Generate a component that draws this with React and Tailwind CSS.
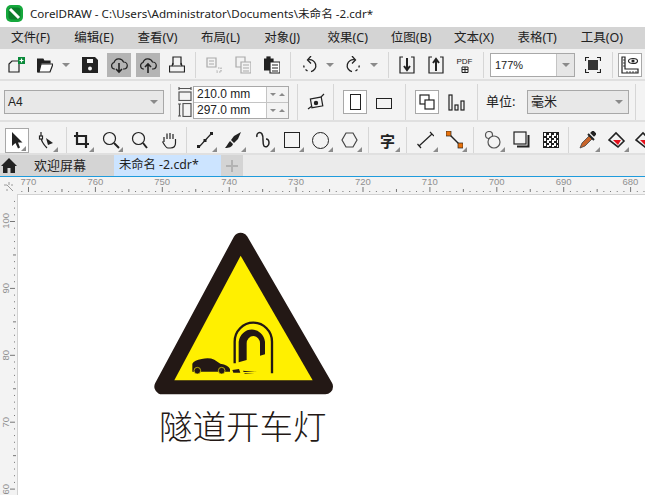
import React from 'react';

const INK = '#222';
const LATIN = "font-['Liberation_Sans',sans-serif]";

const Ico = ({ w = 16, h = 18, className = '', children }) => (
  <svg width={w} height={h} viewBox={`0 0 ${w} ${h}`} fill="none" stroke={INK} strokeWidth="1.2" className={`shrink-0 ${className}`}>
    {children}
  </svg>
);

const Sep = ({ className = '' }) => <div className={`w-px h-[26px] bg-[#d6d6d6] shrink-0 ${className}`} />;

const Caret = ({ className = '' }) => (
  <div className={`w-0 h-0 shrink-0 border-x-[4px] border-x-transparent border-t-[4px] border-t-[#8a8a8a] ${className}`} />
);

const Flyout = () => (
  <div className="absolute right-[2px] bottom-[1px] w-0 h-0 border-l-[5px] border-l-transparent border-b-[5px] border-b-[#8c8c8c]" />
);

const Tool = ({ children, active }) => (
  <div className={`relative h-[25px] shrink-0 flex items-center justify-center ${active ? 'bg-white border border-[#a8a8a8] w-[24px] mx-[2.5px]' : 'w-[29px]'}`}>
    {children}
    <Flyout />
  </div>
);

const menus = ['文件(F)', '编辑(E)', '查看(V)', '布局(L)', '对象(J)', '效果(C)', '位图(B)', '文本(X)', '表格(T)', '工具(O)'];

const rulerLabels = [770, 760, 750, 740, 730, 720, 710, 700, 690, 680];
const sideLabels = [100, 90, 80, 70, 60];

const TopToolbar = () => (
  <div className="h-[32px] pt-[2px] shrink-0 bg-[#f3f3f3] border-b-2 border-[#e0e0e0] flex items-center pl-[8px]">
    <Ico w={17}>
      <path d="M1 8 4 5H11V16H1Z" />
      <rect x="10" y="1" width="7" height="7" fill="#0a8a3a" stroke="none" />
      <path d="M13.5 2.5v4M11.5 4.5h4" stroke="#fff" />
    </Ico>
    <Ico className="ml-[12px]">
      <path d="M0 3H6L7 5H13V7H4L2 16H0Z" fill={INK} />
      <path d="M4 8H16L13 16H2Z" fill="#fff" />
    </Ico>
    <Caret className="ml-[9px]" />
    <Ico className="ml-[12px]">
      <path d="M0 1H13L16 4V17H0Z" fill={INK} stroke="none" />
      <rect x="5" y="3" width="6" height="4" fill="#f3f3f3" stroke="none" />
      <circle cx="8" cy="12.5" r="2" fill="#f3f3f3" stroke="none" />
    </Ico>
    <div className="ml-[9px] w-[24px] h-[24px] bg-[#b4b4b4] flex items-center justify-center">
      <Ico w={18}>
        <path d="M5 13H4A3.4 3.4 0 0 1 4 6.5 5 5 0 0 1 13.5 6 3.5 3.5 0 0 1 14 13H13" />
        <path d="M9 7V16M6 13 9 16 12 13" strokeWidth="1.6" />
      </Ico>
    </div>
    <div className="ml-[5px] w-[24px] h-[24px] bg-[#b4b4b4] flex items-center justify-center">
      <Ico w={18}>
        <path d="M5 13H4A3.4 3.4 0 0 1 4 6.5 5 5 0 0 1 13.5 6 3.5 3.5 0 0 1 14 13H13" />
        <path d="M9 17V8M6 11 9 8 12 11" strokeWidth="1.6" />
      </Ico>
    </div>
    <Ico className="ml-[9px]">
      <path d="M4 9V1H12V9M0.5 10H15.5V16H0.5Z" />
      <path d="M3 10 4 7M13 10 12 7" />
    </Ico>
    <Sep className="ml-[10px]" />
    <Ico className="ml-[10px]">
      <g stroke="#a9a9a9">
        <path d="M1 2H10V11H1ZM3 5H8M3 8H8" />
        <path d="M12 12H15V16H11V14" strokeDasharray="1.5 1" />
      </g>
    </Ico>
    <Ico className="ml-[13px]">
      <g stroke="#a9a9a9">
        <path d="M1 1H10V11H1Z" />
        <path d="M6 6H16V17H6ZM8 9H14M8 12H14M8 15H14" fill="#f3f3f3" />
      </g>
    </Ico>
    <Ico className="ml-[13px]">
      <path d="M0 3H9V14H0Z" fill={INK} />
      <rect x="3" y="1" width="3" height="3" fill={INK} />
      <path d="M6 6H16V17H6Z" fill="#fff" />
      <path d="M8 9H14M8 12H14M8 15H14" />
    </Ico>
    <Sep className="ml-[10px]" />
    <Ico className="ml-[10px]">
      <path d="M7 4A6 6 0 1 1 10 15.6" strokeWidth="1.3" />
      <path d="M6.5 15 4.5 13.5M3.2 11.5 2.6 9.5" strokeWidth="1.3" />
      <path d="M10 0 6.5 4 10 7.5" strokeWidth="1.3" />
    </Ico>
    <Caret className="ml-[9px]" />
    <Ico className="ml-[12px]">
      <path d="M9 4A6 6 0 1 0 6 15.6" strokeWidth="1.3" />
      <path d="M9.5 15 11.5 13.5M12.8 11.5 13.4 9.5" strokeWidth="1.3" />
      <path d="M6 0 9.5 4 6 7.5" strokeWidth="1.3" />
    </Ico>
    <Caret className="ml-[8px]" />
    <Sep className="ml-[10px]" />
    <Ico className="ml-[10px]">
      <path d="M4 1H1V17H15V1H12" />
      <path d="M8 2V13M5 10 8 14 11 10" strokeWidth="2" />
    </Ico>
    <Ico className="ml-[13px]">
      <path d="M4 1H1V17H15V1H12" />
      <path d="M8 15V4M5 7 8 3 11 7" strokeWidth="2" />
    </Ico>
    <div className={`ml-[12px] w-[17px] flex flex-col items-center text-[8px] leading-[9px] text-[#222] ${LATIN}`}>
      <span>PDF</span>
      <Ico w={8} h={7}>
        <path d="M1 1H7V6.5H1ZM4 1V6.5M1 3.5H7" strokeWidth="1" />
      </Ico>
    </div>
    <Sep className="ml-[10px]" />
    <div className="ml-[6px] w-[85px] h-[24px] border border-[#a8a8a8] bg-white flex items-center shrink-0">
      <span className={`flex-1 pl-[4px] text-[11px] text-[#222] ${LATIN}`}>177%</span>
      <div className="w-[18px] h-full bg-[#e6e6e6] border-l border-[#c4c4c4] flex items-center justify-center">
        <Caret />
      </div>
    </div>
    <Ico className="ml-[10px]">
      <path d="M0.5 5V1.5H4M12 1.5H15.5V5M15.5 13V16.5H12M4 16.5H0.5V13" />
      <rect x="3" y="4" width="10" height="10" fill="#333" stroke="none" />
    </Ico>
    <Sep className="ml-[11px]" />
    <div className="ml-[5px] w-[24px] h-[24px] bg-white border border-[#a8a8a8] flex items-center justify-center shrink-0">
      <Ico w={18}>
        <path d="M1 1H4V13H17V17H1Z" />
        <path d="M6 15V17M9 15V17M12 15V17M15 15V17M2 4H4M2 7H4M2 10H4" strokeWidth="0.8" />
        <ellipse cx="12" cy="5" rx="4.5" ry="2.5" />
        <circle cx="12" cy="5" r="1" fill={INK} />
      </Ico>
    </div>
  </div>
);

const PropertyBar = () => (
  <div className="h-[41px] pt-[3px] shrink-0 bg-[#f3f3f3] flex items-center pl-[4px] border-b-2 border-[#e0e0e0]">
    <div className="w-[160px] h-[24px] border border-[#a8a8a8] bg-[#e8e8e8] flex items-center justify-between pl-[3px] pr-[5px] shrink-0">
      <span className={`text-[12px] text-[#222] ${LATIN}`}>A4</span>
      <Caret />
    </div>
    <Sep className="ml-[6px] !h-[36px]" />
    <div className="ml-[7px] flex flex-col gap-[2px] shrink-0">
      <Ico w={14} h={14}>
        <path d="M1 1.5H13M1 0V3M13 0V3" stroke="#555" />
        <rect x="1" y="5" width="12" height="8.5" stroke="#555" />
      </Ico>
      <Ico w={14} h={14}>
        <path d="M1.5 1V13M0 1H3M0 13H3" stroke="#555" />
        <rect x="5" y="0.5" width="8" height="13" stroke="#555" />
      </Ico>
    </div>
    <div className="ml-[1px] w-[96px] h-[33px] border border-[#a8a8a8] flex flex-col shrink-0">
      {['210.0 mm', '297.0 mm'].map((v, i) => (
        <div key={v} className={`flex-1 flex ${i === 0 ? 'border-b border-[#c4c4c4]' : ''}`}>
          <span className={`w-[72px] bg-white pl-[3px] text-[12px] leading-[15px] text-[#222] ${LATIN}`}>{v}</span>
          <div className="flex-1 flex items-center justify-around border-l border-[#c4c4c4] px-[2px]">
            <Caret className="!border-x-[3px] !border-t-[3px]" />
            <div className="w-0 h-0 border-x-[3px] border-x-transparent border-b-[3px] border-b-[#8a8a8a]" />
          </div>
        </div>
      ))}
    </div>
    <Sep className="ml-[8px] !h-[36px]" />
    <div className="relative ml-[9px] shrink-0 w-[18px] h-[18px]">
      <Ico w={18} h={18}>
        <path d="M4 5H15V14H4Z" transform="rotate(-10 9 9)" />
        <circle cx="9" cy="10" r="1.6" fill={INK} />
        <path d="M1 16 5 13M14 4 17 1" />
      </Ico>
    </div>
    <Sep className="ml-[8px] !h-[36px]" />
    <div className="ml-[9px] w-[24px] h-[24px] bg-white border border-[#a8a8a8] flex items-center justify-center shrink-0">
      <div className="w-[11px] h-[16px] border border-[#222]" />
    </div>
    <div className="ml-[9px] w-[16px] h-[11px] border border-[#222] shrink-0 mt-[3px]" />
    <Sep className="ml-[13px] !h-[36px]" />
    <div className="ml-[9px] w-[24px] h-[24px] bg-white border border-[#a8a8a8] flex items-center justify-center shrink-0">
      <Ico w={16} h={16}>
        <rect x="1" y="1" width="9" height="9" />
        <rect x="6" y="6" width="9" height="9" fill="#fff" />
      </Ico>
    </div>
    <Ico w={17} h={17} className="ml-[9px]">
      <rect x="1" y="1" width="3" height="15" />
      <rect x="7" y="11" width="3" height="5" />
      <rect x="13" y="7" width="3" height="9" />
    </Ico>
    <Sep className="ml-[12px] !h-[36px]" />
    <span className="ml-[8px] w-[33px] text-[13px] text-[#222] shrink-0 whitespace-nowrap">单位:</span>
    <div className="ml-[8px] w-[102px] h-[24px] border border-[#a8a8a8] bg-[#e8e8e8] flex items-center justify-between pl-[3px] pr-[5px] shrink-0">
      <span className="text-[13px] text-[#222]">毫米</span>
      <Caret />
    </div>
    <Sep className="ml-[6px] !h-[36px]" />
  </div>
);

const ToolRow = () => (
  <div className="h-[33px] pt-[5px] shrink-0 bg-[#f3f3f3] flex items-center pl-[2px] border-b-2 border-[#e0e0e0]">
    <Tool active>
      <svg width="12" height="17" viewBox="0 0 12 17" fill={INK}><path d="M1 0V14L4.5 11 7 16.5 9 15.5 7 10.5H11.5Z" /></svg>
    </Tool>
    <Tool>
      <Ico w={16}>
        <path d="M3 1V6M3 6C3 11 6 14 9 17" />
        <rect x="1.5" y="5" width="3" height="3" fill="#fff" />
        <path d="M8 7 15 12 10 14Z" fill={INK} stroke="none" />
      </Ico>
    </Tool>
    <Sep className="ml-[6px]" />
    <Tool>
      <Ico w={17}>
        <path d="M4 1V13H16M1 5H13V17" strokeWidth="2.2" />
      </Ico>
    </Tool>
    <Tool>
      <Ico w={18}>
        <circle cx="7.5" cy="7.5" r="6" />
        <path d="M12 12 17 17" strokeWidth="2" />
      </Ico>
    </Tool>
    <div className="w-[29px] flex justify-center shrink-0">
      <Ico w={17}>
        <circle cx="7.5" cy="7.5" r="6" />
        <path d="M12 12 16 17" strokeWidth="2" />
      </Ico>
    </div>
    <div className="w-[29px] flex justify-center shrink-0">
      <Ico w={16}>
        <path d="M3 11V6M6 8V2.5M9 8V2M12 8V3M14.5 8V12C14.5 15 12.5 17 9.5 17H7C5 17 4 15 1.5 10.5" />
      </Ico>
    </div>
    <Sep className="ml-[3px] mr-[3px]" />
    <Tool>
      <Ico w={16}>
        <path d="M2 16 14 3" />
        <rect x="0" y="14" width="3" height="3" fill={INK} stroke="none" />
        <rect x="6.5" y="8" width="3" height="3" fill={INK} stroke="none" />
        <rect x="13" y="1" width="3" height="3" fill={INK} stroke="none" />
      </Ico>
    </Tool>
    <Tool>
      <svg width="17" height="18" viewBox="0 0 17 18" fill={INK}><path d="M16 1 9 5 6 9 9 12 13 8ZM5 10 8 13C7 16 4 17 0 17 2 15 3 12 5 10Z" /></svg>
    </Tool>
    <Tool>
      <Ico w={16}>
        <path d="M2 6C1 2 5 0 7 3 9 6 7 12 9 15 11 17 14 15 14 12 14 10 13 8 11 8" strokeWidth="1.5" />
      </Ico>
    </Tool>
    <Tool>
      <div className="w-[16px] h-[16px] border-[1.5px] border-[#222]" />
    </Tool>
    <Tool>
      <div className="w-[17px] h-[17px] rounded-full border border-[#222]" />
    </Tool>
    <Tool>
      <Ico w={17}>
        <path d="M5 2H12L16 9 12 16H5L1 9Z" stroke="#444" />
      </Ico>
    </Tool>
    <Sep className="ml-[4px] mr-[4px]" />
    <Tool>
      <span className="text-[15px] font-bold leading-none text-[#222] font-['Noto_Sans_CJK_SC',sans-serif]">字</span>
    </Tool>
    <Sep className="ml-[4px] mr-[4px]" />
    <Tool>
      <Ico w={17}>
        <path d="M2 15 15 3M0.5 13 4 17M13 1 17 5" />
      </Ico>
    </Tool>
    <Tool>
      <Ico w={17}>
        <path d="M3 3 14 14" strokeWidth="1.4" />
        <rect x="0" y="0" width="5" height="5" fill="#e8720c" stroke={INK} strokeWidth="0.7" />
        <rect x="12" y="12" width="5" height="5" fill="#e8720c" stroke={INK} strokeWidth="0.7" />
      </Ico>
    </Tool>
    <Sep className="ml-[4px] mr-[4px]" />
    <Tool>
      <Ico w={18}>
        <circle cx="5" cy="4" r="3.5" stroke="#555" />
        <circle cx="10" cy="11" r="6" stroke="#555" fill="#f3f3f3" />
      </Ico>
    </Tool>
    <div className="w-[29px] flex justify-center shrink-0">
      <Ico w={17}>
        <rect x="1" y="1" width="12" height="12" />
        <path d="M4 15.5H15.5V4" strokeWidth="2" />
      </Ico>
    </div>
    <div className="w-[29px] flex justify-center shrink-0">
      <div className="w-[16px] h-[16px] bg-[repeating-conic-gradient(#222_0_25%,#fff_0_50%)] bg-[length:5px_5px] border border-[#222]" />
    </div>
    <Sep className="ml-[3px] mr-[4px]" />
    <Tool>
      <Ico w={17}>
        <path d="M1 17 3 12 10 5 13 8 6 15Z" fill="#c8642a" stroke="#444" strokeWidth="0.8" />
        <path d="M9 3 15 9" strokeWidth="2" />
        <path d="M12 2 14 0 17 3 15 5Z" fill={INK} />
      </Ico>
    </Tool>
    <Tool>
      <Ico w={18}>
        <path d="M1 9 8 2 16 10 10 16Z" strokeWidth="1.6" />
        <path d="M5 9H13L10 14Z" fill="#e5101b" stroke="none" />
      </Ico>
    </Tool>
    <div className="-ml-[2px]">
      <Tool>
        <Ico w={18}>
          <path d="M1 9 8 2 16 10 10 16Z" strokeWidth="1.6" />
          <path d="M5 9H13L10 14Z" fill="#e5101b" stroke="none" />
        </Ico>
      </Tool>
    </div>
  </div>
);

const Tabs = () => (
  <div className="h-[21px] bg-[#ebebeb] flex shrink-0">
    <div className="w-[114px] bg-[#d4d4d4] flex items-center shrink-0">
      <svg width="16" height="15" viewBox="0 0 16 15" fill={INK} className="ml-[1px]">
        <path d="M8 0 16 8H14V15H9.5V10H6.5V15H2V8H0Z" />
      </svg>
      <span className="ml-[17px] text-[13px] text-[#222]">欢迎屏幕</span>
    </div>
    <div className="w-[107px] bg-[#cce4ff] flex items-center pl-[5px] shrink-0">
      <span className="text-[12.3px] text-[#222] whitespace-nowrap">未命名 -2.cdr*</span>
    </div>
    <div className="w-[22px] bg-[#d4d4d4] flex items-center justify-center shrink-0">
      <svg width="12" height="12" viewBox="0 0 12 12" fill="#b2b2b2"><path d="M5 0H7V5H12V7H7V12H5V7H0V5H5Z" /></svg>
    </div>
  </div>
);

const TopRuler = () => (
  <div className="h-[17px] bg-[#f3f3f3] flex relative overflow-hidden shrink-0">
    <div className="w-[17px] shrink-0 flex justify-center pt-[5px]">
      <svg width="10" height="10" viewBox="0 0 10 10" fill="none" stroke="#9a9a9a">
        <path d="M5 0V3M0 3H3M3 3 9 9M7 3H9M3 7V9" />
      </svg>
    </div>
    {rulerLabels.map((n) => (
      <div key={n} className="w-[66.9px] shrink-0 h-full relative">
        <span className={`absolute left-[3.5px] -top-[2px] text-[9.5px] leading-[14px] text-[#8f8f8f] ${LATIN}`}>{n}</span>
      </div>
    ))}
    <svg width="645" height="17" className="absolute left-0 top-0" fill="#777">
      {Array.from({ length: 96 }, (_, i) => {
        const x = 28 + (i - 1) * 6.69;
        const k = (i + 9) % 10;
        return <rect key={i} x={x} y={k === 0 ? 10 : k === 5 ? 12 : 14} width="1" height={k === 0 ? 5 : k === 5 ? 3 : 1} />;
      })}
    </svg>
  </div>
);

const SideRuler = () => (
  <div className="w-[17px] bg-[#f3f3f3] shrink-0 relative overflow-hidden">
    {sideLabels.map((n) => (
      <div key={n} className="h-[67px] flex items-center pl-[1px] first:-mt-[6.5px]">
        <span className={`[writing-mode:vertical-rl] rotate-180 text-[9.5px] leading-[9px] text-[#8f8f8f] ${LATIN}`}>{n}</span>
      </div>
    ))}
    <svg width="17" height="301" className="absolute left-0 top-0" fill="#777">
      {Array.from({ length: 46 }, (_, i) => {
        const y = 27 + (i - 3) * 6.69;
        const k = (i - 3 + 30) % 10;
        return <rect key={i} x={k === 0 ? 10 : k === 5 ? 13 : 14} y={y} width={k === 0 ? 5 : k === 5 ? 3 : 1} height="1" />;
      })}
    </svg>
  </div>
);

const Sign = () => (
  <svg width="200" height="180" viewBox="0 0 600 540" className="block">
    <polygon points="287,46 51,485 541,485" fill="#231815" stroke="#231815" strokeWidth="46" strokeLinejoin="round" />
    <polygon points="287,92 503,466 88,466" fill="#fff000" />
    <path d="M269 415V350A56 57 0 0 1 381 350V445" fill="none" stroke="#231815" strokeWidth="7" />
    <path d="M281 412V350A40 43 0 0 1 360 350V388L345 392V355A20 22 0 0 0 305 355V405Z" fill="#231815" />
    <path d="M142 440V416Q148 406 170 402 192 397 208 404L226 416Q250 420 255 432V440Z" fill="#231815" />
    <circle cx="157" cy="437" r="10" fill="#231815" stroke="#fff000" strokeWidth="2" />
    <circle cx="230" cy="437" r="10" fill="#231815" stroke="#fff000" strokeWidth="2" />
    <path d="M262 435 282 432 286 443 265 443ZM294 437 336 441 296 441ZM297 444H328L300 446Z" fill="#231815" />
  </svg>
);

export default function App() {
  return (
    <div className="w-[645px] h-[495px] overflow-hidden flex flex-col bg-white font-['Noto_Sans','Noto_Sans_CJK_SC',sans-serif]">
      <div className="h-[27px] bg-white flex items-center pl-[6px] shrink-0">
        <svg width="17" height="17" viewBox="0 0 17 17">
          <rect width="17" height="17" rx="5" fill="#15a83c" />
          <rect x="2.5" y="2.5" width="12" height="12" rx="3" fill="#0c7d2b" />
          <path d="M4 4 13 13" stroke="#fff" strokeWidth="3" />
        </svg>
        <span className="ml-[7px] text-[11.6px] text-[#222] whitespace-nowrap">CorelDRAW - C:\Users\Administrator\Documents\未命名 -2.cdr*</span>
      </div>
      <div className="h-[22px] bg-[#d4d4d4] flex items-center pl-[11px] shrink-0">
        {menus.map((m) => (
          <span key={m} className="w-[63.3px] shrink-0 text-[12.5px] text-[#222] whitespace-nowrap">{m}</span>
        ))}
      </div>
      <TopToolbar />
      <PropertyBar />
      <ToolRow />
      <Tabs />
      <div className="h-px bg-[#1e9bdc] shrink-0" />
      <TopRuler />
      <div className="flex-1 flex min-h-0">
        <SideRuler />
        <div className="flex-1 bg-white border-t border-l border-[#d2d2d2] pl-[127px] pt-[30px]">
          <Sign />
          <p className="ml-[14px] mt-[-2px] text-[33.5px] leading-[44px] font-light text-[#231815] whitespace-nowrap font-['Noto_Sans_CJK_SC',sans-serif]">隧道开车灯</p>
        </div>
      </div>
    </div>
  );
}
